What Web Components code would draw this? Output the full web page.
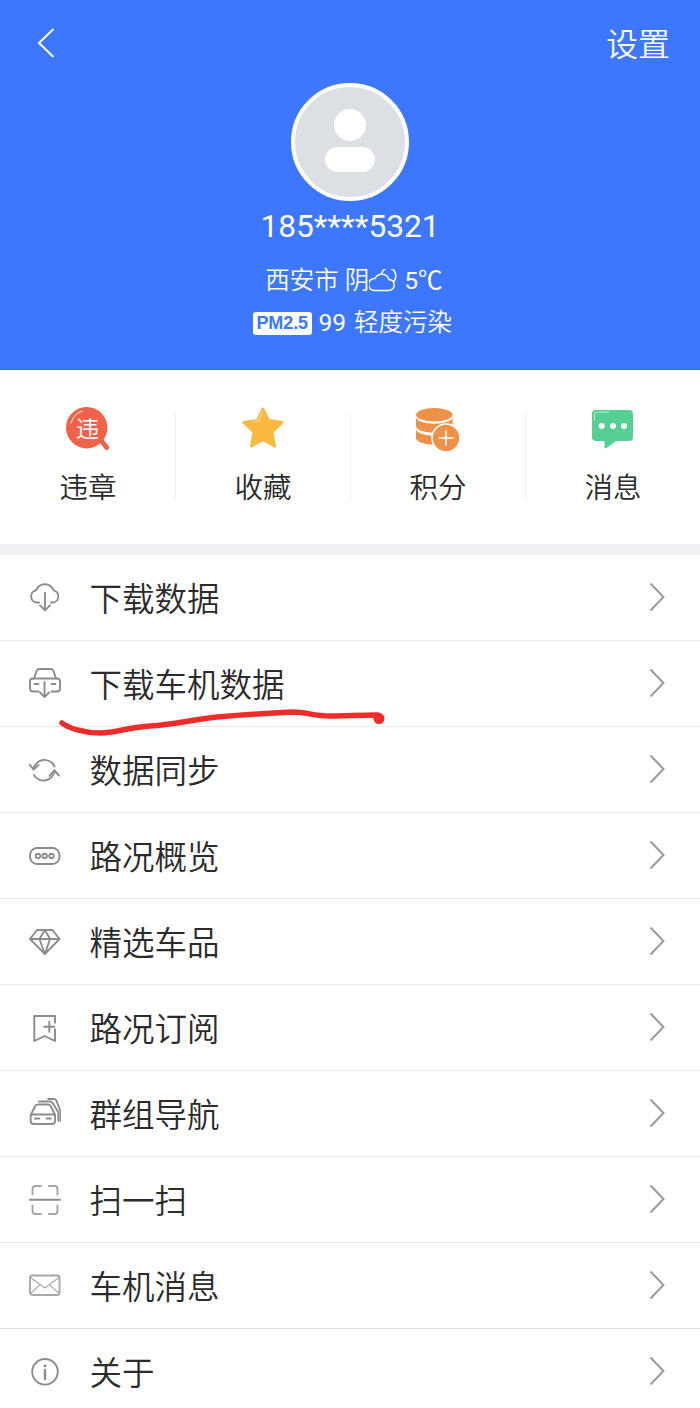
<!DOCTYPE html>
<html lang="zh">
<head>
<meta charset="utf-8">
<title>我的</title>
<style>
  html, body { margin: 0; padding: 0; }
  body {
    width: 700px;
    height: 1408px;
    overflow: hidden;
    position: relative;
    background: #fff;
    font-family: Roboto, "Noto Sans CJK SC", sans-serif;
    color: #333;
  }
</style>
</head>
<body>
  <profile-header phone="185****5321"></profile-header>

  <quick-bar>
    <quick-item label="违章" icon="peccancy"></quick-item>
    <quick-item label="收藏" icon="star"></quick-item>
    <quick-item label="积分" icon="coins"></quick-item>
    <quick-item label="消息" icon="chat"></quick-item>
  </quick-bar>

  <menu-list>
    <menu-row label="下载数据" icon="cloud"></menu-row>
    <menu-row label="下载车机数据" icon="car-down"></menu-row>
    <menu-row label="数据同步" icon="sync"></menu-row>
    <menu-row label="路况概览" icon="dots"></menu-row>
    <menu-row label="精选车品" icon="diamond"></menu-row>
    <menu-row label="路况订阅" icon="bookmark"></menu-row>
    <menu-row label="群组导航" icon="cars"></menu-row>
    <menu-row label="扫一扫" icon="scan"></menu-row>
    <menu-row label="车机消息" icon="mail"></menu-row>
    <menu-row label="关于" icon="info"></menu-row>
  </menu-list>

  <ink-mark></ink-mark>

<script>
const lineIcons = {
  cloud: `<path d="M10 20.500H8.200a6.200 6.200 0 0 1-1-12.300A9.300 9.300 0 0 1 24.600 8.300a6.200 6.200 0 0 1-.8 12.200H22"/><path d="M16 11v17M11 23.400l5 5 5-5"/>`,
  "car-down": `<path d="M5 10.500 7.600 2.800Q8.300 1 10.500 1h11q2.200 0 2.900 1.800l2.600 7.700"/><path d="M9.500 23.500H4q-3 0-3-3V13.500q0-3 3-3h24q3 0 3 3v7q0 3-3 3h-5.500"/><path d="M5.500 16h4M22.500 16h4"/><path d="M15.500 14v14.500M11 24.500l4.500 4.500 4.500-4.500"/>`,
  sync: `<path d="M4.500 15.500A11 11 0 0 1 25.500 12.500"/><path d="M25.500 16.500A11 11 0 0 1 5 21"/><path d="M.5 10.500l4 5 5-4.500"/><path d="M20.500 22l5-5.500 4.500 5"/>`,
  dots: `<rect x="1" y="8" width="29.500" height="16" rx="7"/><circle cx="9" cy="16" r="2.200"/><circle cx="15.700" cy="16" r="2.200"/><circle cx="22.500" cy="16" r="2.200"/>`,
  diamond: `<path d="M8 4h15.500L30.500 13 15.800 28 1 13z"/><path d="M1 13h29.500M10.500 13l5.300 15 5.300-15M10.500 13l5.300-9 5.300 9"/>`,
  bookmark: `<path d="M26 10.700V4H5.300v25L15.600 24 26 29V17.300"/><path d="M15.300 14.700h10M20.300 9.700v10"/>`,
  cars: `<path d="M1.700 17 6 8.500Q7 6.500 9 6.500h10q2 0 3 2L26 17v6q0 3-3 3H4.700q-3 0-3-3z"/><path d="M2 16.500h24M6 20.500h4.300M17.500 20.500h4.300"/><path d="M10 3.500h11q1.700 0 2.700 1.500l5.600 9.300v8.400"/><path d="M19.300 1H25q1.500 0 2.300 1.500L31.500 13v9.700"/>`,
  scan: `<path d="M3.500 10.500V5q0-3 3-3h5.500M20 2h5.500q3 0 3 3v5.500M3.500 21.500V27q0 3 3 3h5.500M20 30h5.500q3 0 3-3v-5.500" style="stroke:#a3a3a3"/><path d="M.5 15.800h30.500" style="stroke:#8c8c8c"/>`,
  mail: `<g style="stroke:#a8a8a8"><rect x="1" y="5.500" width="29.500" height="19.500" rx="2.500"/><path d="M1.500 7.500 15.800 18 30 7.500M1.500 23.500l9.500-8.800M30 23.500l-9.500-8.800" style="stroke-width:1.100"/></g>`,
  info: `<circle cx="16" cy="15.800" r="12.800"/><circle cx="16" cy="9.700" r="1.500" style="fill:#8c8c8c;stroke:none"/><path d="M16 14v9" style="stroke-width:2.400"/>`
};

const colorIcons = {
  peccancy: `<svg width="48" height="46" viewBox="0 0 48 46">
      <path d="M36 33l6.700 8.500" stroke="#ee6349" stroke-width="5" stroke-linecap="round"/>
      <circle cx="22.700" cy="21.700" r="20.700" fill="#ee6349"/>
      <path d="M7 17.500A17 17 0 0 1 18.500 5" fill="none" stroke="#fff" stroke-width="1" opacity=".9"/>
      <text x="23.500" y="30.500" text-anchor="middle" font-size="23" fill="#fff" font-family="'Noto Sans CJK SC', sans-serif">违</text>
    </svg>`,
  star: `<svg width="48" height="46" viewBox="0 0 48 46">
      <path d="M24 3 29.500 14.500 43 16.500 33 26 35.500 40 24 33.500 12.500 40 15 26 5 16.500 18.500 14.500z" fill="#f9b941" stroke="#f9b941" stroke-width="3" stroke-linejoin="round"/>
      <path d="M23.500 5 19.500 15 14.500 16" fill="none" stroke="#fde2a4" stroke-width="1"/>
    </svg>`,
  coins: `<svg width="48" height="46" viewBox="0 0 48 46">
      <g fill="#f0914a">
        <ellipse cx="20.300" cy="8.700" rx="18.300" ry="6.700"/>
        <path d="M2 11A18.300 6.700 0 0 0 38.600 11V20A18.300 6.700 0 0 1 2 20z"/>
        <path d="M2 23A18.300 6.700 0 0 0 38.600 23V32A18.300 6.700 0 0 1 2 32z"/>
      </g>
      <circle cx="32" cy="32" r="14.800" fill="#fff"/>
      <circle cx="32" cy="32" r="13.200" fill="#f0914a"/>
      <path d="M32 24.500v15M24.500 32h15" stroke="#fff" stroke-width="1.500"/>
    </svg>`,
  chat: `<svg width="48" height="46" viewBox="0 0 48 46">
      <path d="M7 4h33q4 0 4 4v23q0 4-4 4H27l-9.500 7q-2 1-2-1V35H7q-4 0-4-4V8q0-4 4-4z" fill="#55cf92"/>
      <path d="M5.500 15V9q0-3 3-3h12" fill="none" stroke="#b9eed3" stroke-width="1"/>
      <circle cx="12.700" cy="20" r="3" fill="#fff"/><circle cx="24" cy="20" r="3" fill="#fff"/><circle cx="35" cy="20" r="3" fill="#fff"/>
    </svg>`
};

customElements.define("profile-header", class ProfileHeader extends HTMLElement {
  constructor() {
    super();
    this.attachShadow({ mode: "open" });
    this.shadowRoot.innerHTML = `
      <style>
        :host {
          display: flex;
          flex-direction: column;
          align-items: center;
          height: 370px;
          box-sizing: border-box;
          background: #3d77fe;
          color: #fff;
          border-bottom: 1px solid #3468d8;
        }
        .top {
          align-self: stretch;
          display: flex;
          justify-content: space-between;
          align-items: center;
          height: 44px;
          padding: 21px 30px 18px 37px;
        }
        .top svg { display: block; }
        .settings { font: 350 32px/44px "Noto Sans CJK SC", sans-serif; margin-top: -2px; }
        .avatar {
          width: 118px;
          height: 118px;
          box-sizing: border-box;
          border: 4px solid #fff;
          border-radius: 50%;
          background: #dcdfe4;
          display: flex;
          flex-direction: column;
          align-items: center;
          gap: 6px;
          padding-top: 22px;
        }
        .avatar i { display: block; background: #fff; }
        .head { width: 32px; height: 32px; border-radius: 50%; }
        .body { width: 50px; height: 25px; border-radius: 13px; }
        .phone { font: 400 31.700px/36px Roboto, sans-serif; margin-top: 8px; }
        .weather {
          display: flex;
          align-items: center;
          padding-left: 8px;
          font: 350 24.500px/32px Roboto, "Noto Sans CJK SC", sans-serif;
          margin-top: 20px;
        }
        .weather svg { margin: 0 6px 0 0; }
        .air {
          display: flex;
          align-items: center;
          padding-left: 5px;
          font: 350 24.500px/32px Roboto, "Noto Sans CJK SC", sans-serif;
          word-spacing: 2px;
          margin-top: 10px;
        }
        .num { font-weight: 400; }
        .pm {
          background: #fff;
          color: #3d77fe;
          font: bold 18px/23px "Liberation Sans", sans-serif;
          padding: 0 3.500px;
          border-radius: 3px;
          margin-right: 7px;
          letter-spacing: -.1px;
        }
      </style>
      <div class="top">
        <svg width="18" height="30" viewBox="0 0 18 30"><path d="M16.500 1 2 15l14.500 14" fill="none" stroke="#fff" stroke-width="2"/></svg>
        <span class="settings">设置</span>
      </div>
      <div class="avatar"><i class="head"></i><i class="body"></i></div>
      <div class="phone">${this.getAttribute("phone")}</div>
      <div class="weather">
        <span>西安市 阴</span>
        <svg width="29" height="24" viewBox="2 0 29 24"><path d="M7 21.500H21.500a5.500 5.500 0 0 0 .5-11A7.500 7.500 0 0 0 8 9.500a6 6 0 0 0-1 12zM14.500 4.500a5.500 5.500 0 0 1 14 3.500 5 5 0 0 1-3 5" fill="none" stroke="#fff" stroke-width="1.500"/></svg>
        <span class="num">5℃</span>
      </div>
      <div class="air"><span class="pm">PM2.5</span><span><span class="num">99</span> 轻度污染</span></div>
    `;
  }
});

customElements.define("quick-bar", class QuickBar extends HTMLElement {
  constructor() {
    super();
    this.attachShadow({ mode: "open" });
    this.shadowRoot.innerHTML = `
      <style>
        :host {
          display: grid;
          grid-template-columns: repeat(4, 175px);
          align-items: start;
          box-sizing: border-box;
          height: 185px;
          padding-top: 43px;
          border-bottom: 11px solid #f0f1f5;
          background: #fff;
        }
      </style>
      <slot></slot>
    `;
  }
});

customElements.define("quick-item", class QuickItem extends HTMLElement {
  constructor() {
    super();
    this.attachShadow({ mode: "open" });
    this.shadowRoot.innerHTML = `
      <style>
        :host {
          display: flex;
          flex-direction: column;
          align-items: center;
          height: 87px;
          border-left: 1px solid #eeeff2;
          box-sizing: border-box;
        }
        :host(:first-child) { border-left-color: transparent; }
        svg { display: block; flex: none; margin-top: -7px; }
        span { flex: none; font: 350 28.500px/40px "Noto Sans CJK SC", sans-serif; color: #2b2b2b; margin-top: 14px; }
      </style>
      ${colorIcons[this.getAttribute("icon")]}
      <span>${this.getAttribute("label")}</span>
    `;
  }
});

customElements.define("menu-list", class MenuList extends HTMLElement {
  constructor() {
    super();
    this.attachShadow({ mode: "open" });
    this.shadowRoot.innerHTML = `
      <style>:host { display: block; background: #fff; }</style>
      <slot></slot>
    `;
  }
});

customElements.define("menu-row", class MenuRow extends HTMLElement {
  constructor() {
    super();
    this.attachShadow({ mode: "open" });
    this.shadowRoot.innerHTML = `
      <style>
        :host {
          display: flex;
          align-items: center;
          height: 86px;
          box-sizing: border-box;
          padding: 0 35px 0 29px;
          border-bottom: 1.500px solid #ebebeb;
        }
        :host(:nth-last-child(2)) { border-bottom-color: #dcdcdc; }
        :host(:last-child) { border-bottom: 0; }
        .icon { width: 32px; height: 32px; flex: none; display: block; fill: none; stroke: #8c8c8c; stroke-width: 1.900; stroke-linecap: round; stroke-linejoin: round; }
        .label { flex: 1; margin: -2px 0 0 28.500px; font: 350 32.500px/44px "Noto Sans CJK SC", sans-serif; color: #2b2b2b; }
        .arrow { width: 16px; height: 30px; flex: none; display: block; margin-top: -2px; fill: none; stroke: #9a9a9a; stroke-width: 2; }
      </style>
      <svg class="icon" viewBox="0 0 32 32">${lineIcons[this.getAttribute("icon")]}</svg>
      <span class="label">${this.getAttribute("label")}</span>
      <svg class="arrow" viewBox="0 0 16 30"><path d="M1.500 1.500 14.500 15 1.500 28.500"/></svg>
    `;
  }
});

// hand-drawn red underline lying over the list
customElements.define("ink-mark", class InkMark extends HTMLElement {
  constructor() {
    super();
    this.attachShadow({ mode: "open" });
    this.shadowRoot.innerHTML = `
      <style>
        :host { position: absolute; left: 0; top: 700px; width: 400px; height: 40px; pointer-events: none; }
        svg { display: block; }
      </style>
      <svg width="400" height="40" viewBox="0 700 400 40">
        <path d="M62 723C68 728 84 733 100 733 116 733 124 728 150 726 172 725 190 720 217 717 240 715 270 713 293 712 306 712 314 716 330 716 345 716 360 715 378 715" fill="none" stroke="#ee2d2a" stroke-width="5.500" stroke-linecap="round"/>
        <circle cx="379" cy="718.500" r="5.500" fill="#ee2d2a"/>
      </svg>
    `;
  }
});
</script>
</body>
</html>
